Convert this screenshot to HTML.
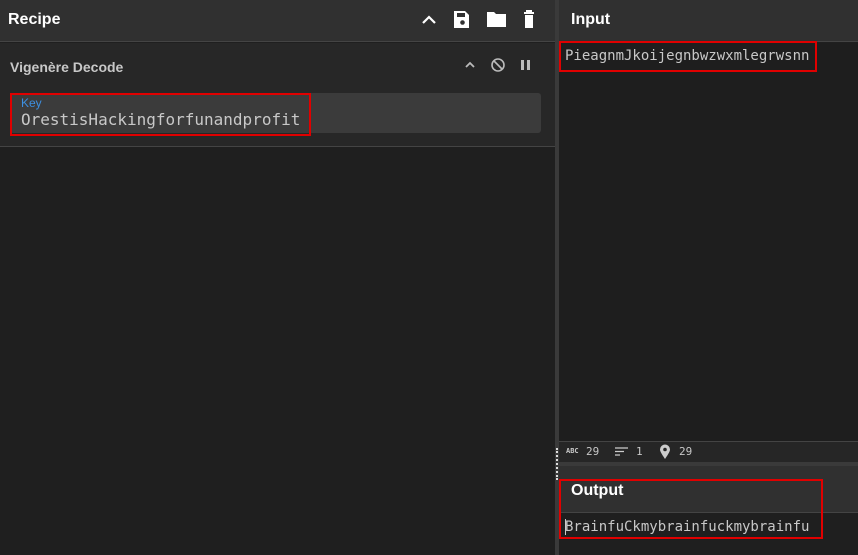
<!DOCTYPE html>
<html><head><style>
*{margin:0;padding:0;box-sizing:border-box}
body{width:858px;height:555px;background:#1f1f1f;font-family:"Liberation Sans",sans-serif;position:relative;overflow:hidden}
.abs{position:absolute}
.mono{font-family:"DejaVu Sans Mono","Liberation Mono",monospace}
.red{border:2px solid #e00000}
</style></head><body>
<!-- left -->
<div class="abs" style="left:0;top:0;width:555px;height:42px;background:#303030;border-bottom:1px solid #444"></div>
<div class="abs" style="left:8px;top:11px;color:#fff;font-weight:bold;font-size:16px">Recipe</div>
<svg class="abs" style="left:420px;top:10px" width="124" height="20" viewBox="0 0 124 20">
<path d="M3 13 L9 7 L15 13" stroke="#fff" stroke-width="2.2" fill="none"/>
<path d="M34 1h11l4 4v13h-15z" fill="#fff"/><rect x="37" y="3" width="8" height="4" fill="#303030"/><circle cx="42.5" cy="12.5" r="2.3" fill="#303030"/>
<path d="M67 2h7l2 2h10v13h-19z" fill="#fff"/>
<path d="M104 2h10v2h-10z M106 0h6v2h-6z M105 5h8v13h-8z" fill="#fff"/>
</svg>
<div class="abs" style="left:0;top:43px;width:555px;height:104px;background:#272727;border-bottom:1px solid #444"></div>
<div class="abs" style="left:10px;top:59px;color:#c8c8c8;font-weight:bold;font-size:14px">Vigenère Decode</div>
<svg class="abs" style="left:462px;top:56px" width="72" height="18" viewBox="0 0 72 18">
<path d="M4 11 L8 7 L12 11" stroke="#bbb" stroke-width="1.8" fill="none"/>
<circle cx="36" cy="9" r="6" stroke="#bbb" stroke-width="1.6" fill="none"/><path d="M32 5 L40 13" stroke="#bbb" stroke-width="1.6"/>
<rect x="59" y="4" width="3" height="10" fill="#bbb"/><rect x="65" y="4" width="3" height="10" fill="#bbb"/>
</svg>
<div class="abs" style="left:10px;top:93px;width:531px;height:40px;background:#3b3b3b;border-radius:3px"></div>
<div class="abs red" style="left:10px;top:93px;width:301px;height:43px"></div>
<div class="abs" style="left:21px;top:96px;color:#3d8fe0;font-size:12px">Key</div>
<div class="abs mono" style="left:21px;top:110px;color:#c8c8c8;font-size:16px;letter-spacing:0">OrestisHackingforfunandprofit</div>
<!-- divider -->
<div class="abs" style="left:555px;top:0;width:4px;height:555px;background:#3a3a3a"></div>
<div class="abs" style="left:556px;top:448px;width:2px;height:32px;border-left:2px dotted #ddd"></div>
<!-- right -->
<div class="abs" style="left:559px;top:0;width:299px;height:42px;background:#303030;border-bottom:1px solid #444"></div>
<div class="abs" style="left:571px;top:11px;color:#fff;font-weight:bold;font-size:16px">Input</div>
<div class="abs" style="left:559px;top:43px;width:299px;height:398px;background:#1e1e1e"></div>
<div class="abs red" style="left:559px;top:41px;width:258px;height:31px"></div>
<div class="abs mono" style="left:565px;top:48px;color:#c8c8c8;font-size:14px">PieagnmJkoijegnbwzwxmlegrwsnn</div>
<div class="abs" style="left:559px;top:441px;width:299px;height:21px;background:#262626;border-top:1px solid #444"></div>
<div class="abs mono" style="left:566px;top:447px;color:#c8c8c8;font-size:7px;font-weight:bold">ABC</div>
<div class="abs mono" style="left:586px;top:445px;color:#c8c8c8;font-size:11px">29</div>
<div class="abs mono" style="left:636px;top:445px;color:#c8c8c8;font-size:11px">1</div>
<div class="abs mono" style="left:679px;top:445px;color:#c8c8c8;font-size:11px">29</div>
<svg class="abs" style="left:615px;top:447px" width="14" height="10" viewBox="0 0 14 10"><path d="M0 1h13M0 4.5h9M0 8h5" stroke="#ccc" stroke-width="1.3"/></svg>
<svg class="abs" style="left:659px;top:444px" width="12" height="16" viewBox="0 0 12 16"><path d="M6 15 C2 9 1 7 1 5.5 A5 5 0 0 1 11 5.5 C11 7 10 9 6 15z" fill="#ccc"/><circle cx="6" cy="5.5" r="1.8" fill="#262626"/></svg>
<div class="abs" style="left:559px;top:462px;width:299px;height:4px;background:#3a3a3a"></div>
<div class="abs" style="left:559px;top:466px;width:299px;height:47px;background:#303030;border-bottom:1px solid #444"></div>
<div class="abs" style="left:571px;top:482px;color:#fff;font-weight:bold;font-size:16px">Output</div>
<div class="abs red" style="left:559px;top:479px;width:264px;height:60px"></div>
<div class="abs" style="left:565px;top:519px;width:1px;height:16px;background:#ccc"></div>
<div class="abs mono" style="left:565px;top:519px;color:#c8c8c8;font-size:14px">BrainfuCkmybrainfuckmybrainfu</div>
</body></html>
